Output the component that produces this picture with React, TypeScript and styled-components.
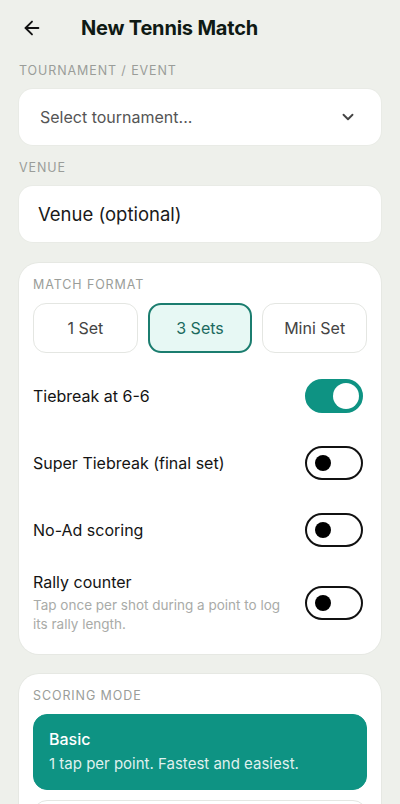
import React, { useState } from 'react';
import styled, { createGlobalStyle } from 'styled-components';
import { ArrowLeft, ChevronDown } from 'lucide-react';

const GlobalStyle = createGlobalStyle`
    html, body {
        margin: 0;
        padding: 0;
        background: #eef0eb;
        font-family: Inter, "Noto Sans", "Liberation Sans", sans-serif;
        -webkit-font-smoothing: antialiased;
    }
    * { box-sizing: border-box; }
`;

const teal = '#0e9383';

const Page = styled.div`
    width: 400px;
    height: 804px;
    overflow: hidden;
    padding: 0 19px;
    background: #eef0eb;
    display: flex;
    flex-direction: column;

    & > * {
        flex-shrink: 0;
    }
`;

const Header = styled.header`
    height: 56px;
    display: flex;
    align-items: center;
    gap: 38px;
    padding-left: 2px;
`;

const BackButton = styled.button`
    border: none;
    background: none;
    padding: 0;
    display: flex;
    color: #111;
`;

const Title = styled.h1`
    margin: 0;
    font-size: 20px;
    font-weight: 700;
    letter-spacing: -0.2px;
    color: #0f1a14;
`;

const Label = styled.div<{ $inset?: boolean }>`
    font-size: 12.5px;
    letter-spacing: 0.9px;
    line-height: 16px;
    text-transform: uppercase;
    color: #9a9d99;
    margin: ${({ $inset }) => ($inset ? '0' : '7px 0 10px')};
`;

const Field = styled.div`
    height: 56px;
    background: #fff;
    border-radius: 14px;
    display: flex;
    align-items: center;
    justify-content: space-between;
    padding: 0 24px 0 21px;
    margin-bottom: 8px;
    box-shadow: 0 0 0 1px #e9ebe6;
`;

const Placeholder = styled.span`
    font-size: 16px;
    color: #555;
`;

const VenueText = styled.span`
    font-size: 18.5px;
    color: #1a1a1a;
    margin-left: -2px;
`;

const Card = styled.section`
    background: #fff;
    border-radius: 20px;
    padding: 14px 14px 20px;
    margin: 13px 0 7px;
    box-shadow: 0 0 0 1px #e6e8e3;
    display: flex;
    flex-direction: column;
`;

const Segments = styled.div`
    display: grid;
    grid-template-columns: repeat(3, 1fr);
    gap: 10px;
    margin-top: 10px;
`;

const Segment = styled.button<{ $active?: boolean }>`
    height: 50px;
    border-radius: 13px;
    font-family: inherit;
    font-size: 16px;
    background: ${({ $active }) => ($active ? '#e7f8f4' : '#fff')};
    border: ${({ $active }) => ($active ? '2px solid #1b7d6f' : '1px solid #e4e6e2')};
    color: ${({ $active }) => ($active ? '#1b6a5e' : '#444')};
`;

const Rows = styled.div`
    display: flex;
    flex-direction: column;
    gap: 18px;
    margin-top: 18px;
`;

const Row = styled.div`
    min-height: 49px;
    display: flex;
    align-items: center;
    justify-content: space-between;
`;

const RowText = styled.div`
    display: flex;
    flex-direction: column;
    padding-right: 16px;
`;

const RowTitle = styled.span`
    font-size: 16px;
    line-height: 20px;
    color: #141414;
`;

const RowHint = styled.span`
    font-size: 13.5px;
    line-height: 19px;
    color: #a9aba8;
    margin-top: 4px;
`;

const Switch = styled.button<{ $on: boolean }>`
    flex: none;
    width: 58px;
    height: 34px;
    margin-right: 4px;
    border-radius: 17px;
    padding: 0;
    position: relative;
    background: ${({ $on }) => ($on ? teal : '#fff')};
    border: 2px solid ${({ $on }) => ($on ? teal : '#111')};
    cursor: pointer;
`;

const Knob = styled.span<{ $on: boolean }>`
    position: absolute;
    top: 50%;
    border-radius: 50%;
    transform: translateY(-50%);
    width: ${({ $on }) => ($on ? '26px' : '16px')};
    height: ${({ $on }) => ($on ? '26px' : '16px')};
    left: ${({ $on }) => ($on ? '26px' : '8px')};
    background: ${({ $on }) => ($on ? '#fff' : '#000')};
`;

const ModeOption = styled.div<{ $active?: boolean }>`
    margin-top: 10px;
    border-radius: 14px;
    padding: 14px 15px 15px;
    background: ${({ $active }) => ($active ? teal : '#fff')};
    border: 1px solid ${({ $active }) => ($active ? teal : '#e4e6e2')};
    color: ${({ $active }) => ($active ? '#fff' : '#141414')};
    display: flex;
    flex-direction: column;
    gap: 5px;
`;

const ModeName = styled.span`
    font-size: 16px;
    font-weight: 500;
    line-height: 20px;
`;

const ModeDesc = styled.span<{ $active?: boolean }>`
    font-size: 15px;
    line-height: 20px;
    color: ${({ $active }) => ($active ? 'rgba(255,255,255,0.88)' : '#888')};
`;

const Toggle = ({ on, onClick }: { on: boolean; onClick: () => void }) => (
    <Switch $on={on} onClick={onClick}>
        <Knob $on={on} />
    </Switch>
);

export default function App() {
    const [sets, setSets] = useState('3 Sets');
    const [opts, setOpts] = useState({ tiebreak: true, superTb: false, noAd: false, rally: false });
    const flip = (k: keyof typeof opts) => setOpts({ ...opts, [k]: !opts[k] });

    return (
        <>
            <GlobalStyle />
            <Page>
                <Header>
                    <BackButton>
                        <ArrowLeft size={22} strokeWidth={2} />
                    </BackButton>
                    <Title>New Tennis Match</Title>
                </Header>

                <Label>Tournament / Event</Label>
                <Field>
                    <Placeholder>Select tournament...</Placeholder>
                    <ChevronDown size={18} strokeWidth={2.5} color="#444" />
                </Field>

                <Label>Venue</Label>
                <Field>
                    <VenueText>Venue (optional)</VenueText>
                </Field>

                <Card>
                    <Label $inset>Match Format</Label>
                    <Segments>
                        {['1 Set', '3 Sets', 'Mini Set'].map((s) => (
                            <Segment key={s} $active={s === sets} onClick={() => setSets(s)}>
                                {s}
                            </Segment>
                        ))}
                    </Segments>
                    <Rows>
                        <Row>
                            <RowTitle>Tiebreak at 6-6</RowTitle>
                            <Toggle on={opts.tiebreak} onClick={() => flip('tiebreak')} />
                        </Row>
                        <Row>
                            <RowTitle>Super Tiebreak (final set)</RowTitle>
                            <Toggle on={opts.superTb} onClick={() => flip('superTb')} />
                        </Row>
                        <Row>
                            <RowTitle>No-Ad scoring</RowTitle>
                            <Toggle on={opts.noAd} onClick={() => flip('noAd')} />
                        </Row>
                        <Row>
                            <RowText>
                                <RowTitle>Rally counter</RowTitle>
                                <RowHint>Tap once per shot during a point to log its rally length.</RowHint>
                            </RowText>
                            <Toggle on={opts.rally} onClick={() => flip('rally')} />
                        </Row>
                    </Rows>
                </Card>

                <Card>
                    <Label $inset>Scoring Mode</Label>
                    <ModeOption $active>
                        <ModeName>Basic</ModeName>
                        <ModeDesc $active>1 tap per point. Fastest and easiest.</ModeDesc>
                    </ModeOption>
                    <ModeOption>
                        <ModeName>Detailed</ModeName>
                        <ModeDesc>Track shot types and errors.</ModeDesc>
                    </ModeOption>
                </Card>
            </Page>
        </>
    );
}
